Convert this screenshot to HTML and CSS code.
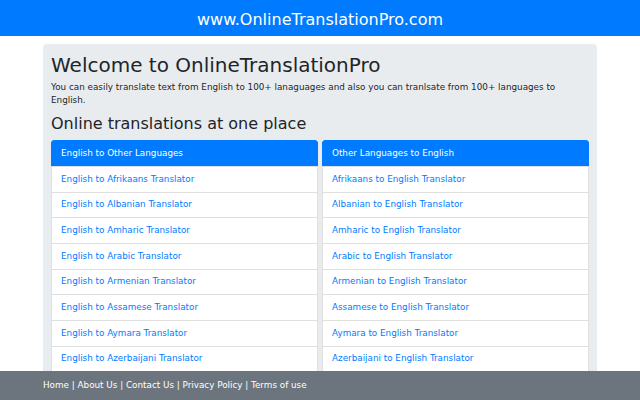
FILE: index.html
```html
<!DOCTYPE html>
<html lang="en">
<head>
<meta charset="utf-8">
<title>OnlineTranslationPro</title>
<link rel="stylesheet" href="styles.css">
</head>
<body>
<header class="topbar">www.OnlineTranslationPro.com</header>
<main class="container">
  <section class="jumbo">
    <h1 class="title">Welcome to OnlineTranslationPro</h1>
    <p class="intro">You can easily translate text from English to 100+ lanaguages and also you can tranlsate from 100+ languages to English.</p>
    <h2 class="subtitle">Online translations at one place</h2>
    <div class="cols">
      <ul class="list">
        <li class="item active">English to Other Languages</li>
        <li class="item"><a href="#">English to Afrikaans Translator</a></li>
        <li class="item"><a href="#">English to Albanian Translator</a></li>
        <li class="item"><a href="#">English to Amharic Translator</a></li>
        <li class="item"><a href="#">English to Arabic Translator</a></li>
        <li class="item"><a href="#">English to Armenian Translator</a></li>
        <li class="item"><a href="#">English to Assamese Translator</a></li>
        <li class="item"><a href="#">English to Aymara Translator</a></li>
        <li class="item"><a href="#">English to Azerbaijani Translator</a></li>
      </ul>
      <ul class="list">
        <li class="item active">Other Languages to English</li>
        <li class="item"><a href="#">Afrikaans to English Translator</a></li>
        <li class="item"><a href="#">Albanian to English Translator</a></li>
        <li class="item"><a href="#">Amharic to English Translator</a></li>
        <li class="item"><a href="#">Arabic to English Translator</a></li>
        <li class="item"><a href="#">Armenian to English Translator</a></li>
        <li class="item"><a href="#">Assamese to English Translator</a></li>
        <li class="item"><a href="#">Aymara to English Translator</a></li>
        <li class="item"><a href="#">Azerbaijani to English Translator</a></li>
      </ul>
    </div>
  </section>
</main>
<footer class="footer">
  <div class="footer-inner">
    <a href="#">Home</a> | <a href="#">About Us</a> | <a href="#">Contact Us</a> | <a href="#">Privacy Policy</a> | <a href="#">Terms of use</a>
  </div>
</footer>
</body>
</html>
```
FILE: styles.css
```css
html, body {
  margin: 0;
  padding: 0;
}
body {
  font-family: "DejaVu Sans", sans-serif;
  color: #212529;
  background: #fff;
  overflow: hidden;
}
.topbar {
  box-sizing: border-box;
  background: #007bff;
  color: #fff;
  text-align: center;
  font-size: 16px;
  height: 36px;
  padding-top: 3px;
  line-height: 33px;
}
.container {
  padding: 8px 43px 0;
}
.jumbo {
  background: #e9ecef;
  border-radius: 4px;
  padding: 9px 8px 8px;
}
.title {
  font-size: 20px;
  font-weight: 400;
  line-height: 24px;
  margin: 0 0 3.5px;
}
.intro {
  font-size: 8.8px;
  line-height: 13.2px;
  margin: 0 0 7.4px;
}
.subtitle {
  font-size: 16px;
  font-weight: 400;
  line-height: 19.2px;
  margin: 0 0 6.6px;
}
.cols {
  display: grid;
  grid-template-columns: 1fr 1fr;
  gap: 4px;
}
.list {
  list-style: none;
  margin: 0;
  padding: 0;
}
.item {
  background: #fff;
  border: 1px solid rgba(0, 0, 0, 0.125);
  margin-bottom: -1px;
  padding: 5.75px 9px;
  font-size: 8.8px;
  line-height: 13.2px;
}
.item:first-child {
  border-radius: 3px 3px 0 0;
}
.item.active {
  background: #007bff;
  border-color: #007bff;
  color: #fff;
}
.item a {
  color: #007bff;
  text-decoration: none;
}
.footer {
  position: fixed;
  left: 0;
  right: 0;
  bottom: 0;
  height: 29px;
  background: #6c757d;
  color: #fff;
  font-size: 8.8px;
  line-height: 13.2px;
}
.footer-inner {
  padding: 7.7px 43px 0;
}
.footer a {
  color: #fff;
  text-decoration: none;
}
```
